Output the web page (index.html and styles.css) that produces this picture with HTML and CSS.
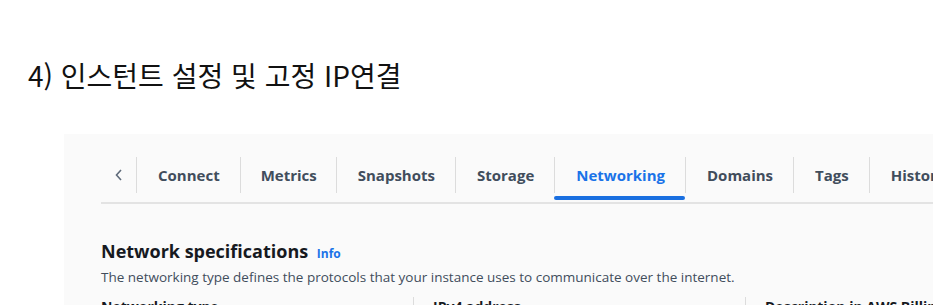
FILE: index.html
```html
<!DOCTYPE html>
<html lang="ko">
<head>
<meta charset="utf-8">
<link rel="stylesheet" href="styles.css">
</head>
<body>
<h2 class="step">4) 인스턴트 설정 및 고정 IP연결</h2>
<div class="shot">
  <div class="tabs">
    <div class="chev"><svg width="10" height="14" viewBox="0 0 10 14"><path d="M7 2 L2.5 7 L7 12" fill="none" stroke="#5f6b7a" stroke-width="1.6"/></svg></div>
    <div class="tab">Connect</div>
    <div class="tab tight">Metrics</div>
    <div class="tab">Snapshots</div>
    <div class="tab">Storage</div>
    <div class="tab active">Networking</div>
    <div class="tab">Domains</div>
    <div class="tab">Tags</div>
    <div class="tab">History</div>
  </div>
  <div class="spec">
    <div class="spec-title">Network specifications <span class="info">Info</span></div>
    <div class="spec-desc">The networking type defines the protocols that your instance uses to communicate over the internet.</div>
    <div class="cols">
      <div class="col">Networking type</div>
      <div class="col">IPv4 address</div>
      <div class="col">Description in AWS Billing</div>
    </div>
  </div>
</div>
</body>
</html>
```
FILE: styles.css
```css
html, body { margin: 0; padding: 0; background: #ffffff; overflow: hidden; }
body { width: 933px; height: 305px; }
.step {
  margin: 0;
  padding: 56px 0 0 28px;
  font-family: "Noto Sans CJK KR", "Noto Sans", sans-serif;
  font-weight: 400;
  font-size: 28px;
  line-height: 38px;
  color: #111;
}
.shot {
  margin: 40px 0 0 64px;
  background: #fafafa;
  padding: 23px 0 0 37px;
  height: 200px;
  font-family: "Open Sans", sans-serif;
  overflow: hidden;
}
.tabs {
  display: flex;
  align-items: flex-start;
  border-bottom: 2px solid #e3e3e3;
  height: 45px;
  white-space: nowrap;
}
.chev {
  flex-shrink: 0;
  width: 36px;
  height: 36px;
  display: flex;
  align-items: center;
  justify-content: center;
  border-right: 1px solid #dcdcdc;
  box-sizing: border-box;
}
.tab {
  flex-shrink: 0;
  position: relative;
  padding: 0 20px 0 21px;
  height: 36px;
  display: flex;
  align-items: center;
  font-size: 15px;
  font-weight: 700;
  color: #414d5c;
  border-right: 1px solid #dcdcdc;
}
.tab.tight { padding: 0 19px 0 20px; }
.tab:last-child { border-right: none; }
.tab.active { color: #1a73e8; }
.tab.active::after {
  content: "";
  position: absolute;
  left: -1px;
  right: 0;
  bottom: -7px;
  height: 4px;
  background: #1a6fe0;
  border-radius: 2px;
}
.spec { padding-top: 33px; }
.spec-title {
  font-size: 18px;
  font-weight: 700;
  color: #16191f;
  line-height: 28px;
}
.info { font-size: 12px; color: #1a73e8; margin-left: 4px; }
.spec-desc {
  font-size: 13.5px;
  color: #414d5c;
  line-height: 20px;
  margin-top: -1px;
}
.cols { display: flex; margin-top: 10px; }
.col {
  flex-shrink: 0;
  width: 312px;
  font-size: 14px;
  font-weight: 700;
  color: #16191f;
  line-height: 20px;
  padding-left: 19px;
  border-left: 1px solid #dcdcdc;
}
.col:first-child { padding-left: 0; border-left: none; }
```
